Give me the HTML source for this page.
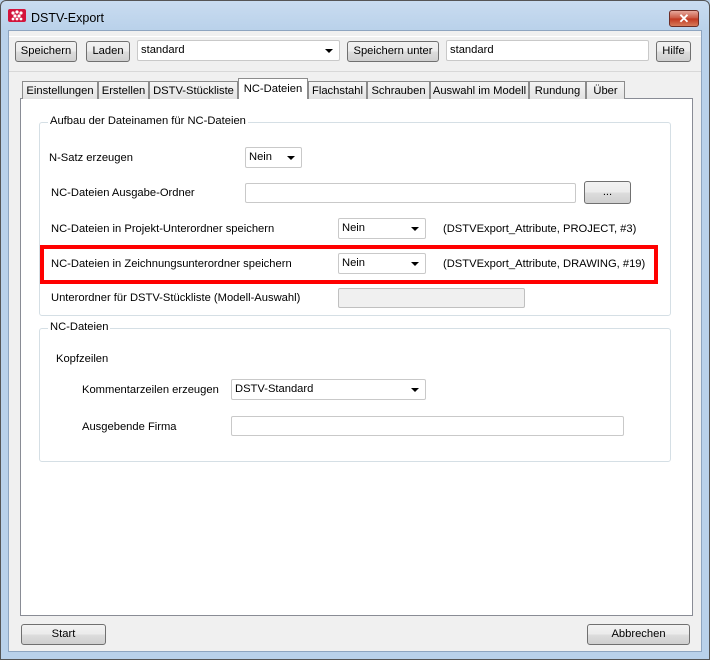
<!DOCTYPE html>
<html><head><meta charset="utf-8"><style>
*{box-sizing:border-box;margin:0;padding:0}
body{width:710px;height:660px;overflow:hidden;background:#b9d1ea;font-family:"Liberation Sans",sans-serif;font-size:11.2px;color:#000;position:relative}
.a{position:absolute}
.win{left:0;top:0;width:710px;height:660px;border:1px solid #555;border-radius:6px 6px 0 0;background:linear-gradient(#c9dcf0,#b9d1ea 30px)}
.client{left:8px;top:30px;width:694px;height:622px;background:#f0f0f0;border:1px solid #8ea5c0}
.btn{position:absolute;border:1px solid #707070;border-radius:3px;background:linear-gradient(#f2f2f2 0,#ebebeb 50%,#dddddd 51%,#cfcfcf 100%);text-align:center;line-height:19px;white-space:nowrap}
.tb{position:absolute;background:#fff;border:1px solid #c9c9c9;border-radius:2px;padding-left:3px;line-height:19px;white-space:nowrap}
.arr{position:absolute;right:6px;top:8px;width:0;height:0;border-left:4px solid transparent;border-right:4px solid transparent;border-top:4px solid #000}
.tab{position:absolute;top:81px;height:18px;border:1px solid #8c8c8c;border-bottom:none;background:linear-gradient(#f5f5f5,#e2e2e2);text-align:center;line-height:18px;white-space:nowrap}
.grp{position:absolute;border:1px solid #d5dfe5;border-radius:3px}
.lg{position:absolute;top:-8px;left:8px;background:#fff;padding:0 2px;white-space:nowrap}
.t{position:absolute;white-space:nowrap;margin-top:1px}
</style></head><body>
<div class="a win"></div>
<svg class="a" style="left:8px;top:8px" width="18" height="15" viewBox="0 0 18 15"><rect x="0" y="1" width="18" height="13" rx="2" fill="#d3143c"/><g fill="#fff"><circle cx="5" cy="5" r="1.6"/><circle cx="9" cy="4" r="1.6"/><circle cx="13" cy="5" r="1.6"/><circle cx="7" cy="8" r="1.6"/><circle cx="11" cy="8" r="1.6"/><circle cx="5" cy="11" r="1.4"/><circle cx="9" cy="11" r="1.4"/><circle cx="13" cy="11" r="1.4"/></g></svg>
<div class="t" style="left:31px;top:10px;font-size:12.5px">DSTV-Export</div>
<div class="a" style="left:669px;top:10px;width:30px;height:17px;border:1px solid #6d2d26;border-radius:3px;background:linear-gradient(#e7a89c,#c9553f 50%,#c1361f 51%,#d77a5a);color:#fff;font-weight:bold;text-align:center;line-height:15px;font-size:13px">✕</div>
<div class="a client"></div>
<div class="a" style="left:9px;top:36px;width:692px;height:36px;border-top:1px solid #fff;border-bottom:1px solid #d8d8d8"></div>
<div class="btn" style="left:15px;top:41px;width:62px;height:21px">Speichern</div>
<div class="btn" style="left:86px;top:41px;width:44px;height:21px">Laden</div>
<div class="tb" style="left:137px;top:40px;width:203px;height:21px">standard<div class="arr"></div></div>
<div class="btn" style="left:347px;top:41px;width:92px;height:21px">Speichern unter</div>
<div class="tb" style="left:446px;top:40px;width:203px;height:21px">standard</div>
<div class="btn" style="left:656px;top:41px;width:35px;height:21px">Hilfe</div>

<div class="a" style="left:20px;top:98px;width:673px;height:518px;background:#fff;border:1px solid #898c95"></div>
<div class="tab" style="left:22px;width:76px">Einstellungen</div>
<div class="tab" style="left:98px;width:51px">Erstellen</div>
<div class="tab" style="left:149px;width:89px">DSTV-Stückliste</div>
<div class="tab" style="left:238px;top:78px;height:21px;width:70px;background:#fff;z-index:2;line-height:21px">NC-Dateien</div>
<div class="tab" style="left:308px;width:59px">Flachstahl</div>
<div class="tab" style="left:367px;width:63px">Schrauben</div>
<div class="tab" style="left:430px;width:99px">Auswahl im Modell</div>
<div class="tab" style="left:529px;width:57px">Rundung</div>
<div class="tab" style="left:586px;width:39px">Über</div>

<div class="grp" style="left:39px;top:122px;width:632px;height:194px"><div class="lg">Aufbau der Dateinamen für NC-Dateien</div></div>
<div class="t" style="left:49px;top:151px">N-Satz erzeugen</div>
<div class="tb" style="left:245px;top:147px;width:57px;height:21px">Nein<div class="arr"></div></div>
<div class="t" style="left:51px;top:186px">NC-Dateien Ausgabe-Ordner</div>
<div class="tb" style="left:245px;top:183px;width:331px;height:20px"></div>
<div class="btn" style="left:584px;top:181px;width:47px;height:23px;line-height:20px">...</div>
<div class="t" style="left:51px;top:222px">NC-Dateien in Projekt-Unterordner speichern</div>
<div class="tb" style="left:338px;top:218px;width:88px;height:21px">Nein<div class="arr"></div></div>
<div class="t" style="left:443px;top:222px">(DSTVExport_Attribute, PROJECT, #3)</div>
<div class="a" style="left:40px;top:245px;width:618px;height:39px;border:4px solid #f00"></div>
<div class="t" style="left:51px;top:257px">NC-Dateien in Zeichnungsunterordner speichern</div>
<div class="tb" style="left:338px;top:253px;width:88px;height:21px">Nein<div class="arr"></div></div>
<div class="t" style="left:443px;top:257px">(DSTVExport_Attribute, DRAWING, #19)</div>
<div class="t" style="left:51px;top:291px">Unterordner für DSTV-Stückliste (Modell-Auswahl)</div>
<div class="tb" style="left:338px;top:288px;width:187px;height:20px;background:#f0f0f0;border-color:#c0c0c0"></div>

<div class="grp" style="left:39px;top:328px;width:632px;height:134px"><div class="lg">NC-Dateien</div></div>
<div class="t" style="left:56px;top:352px">Kopfzeilen</div>
<div class="t" style="left:82px;top:383px">Kommentarzeilen erzeugen</div>
<div class="tb" style="left:231px;top:379px;width:195px;height:21px">DSTV-Standard<div class="arr"></div></div>
<div class="t" style="left:82px;top:420px">Ausgebende Firma</div>
<div class="tb" style="left:231px;top:416px;width:393px;height:20px"></div>

<div class="btn" style="left:21px;top:624px;width:85px;height:21px">Start</div>
<div class="btn" style="left:587px;top:624px;width:103px;height:21px">Abbrechen</div>
</body></html>
